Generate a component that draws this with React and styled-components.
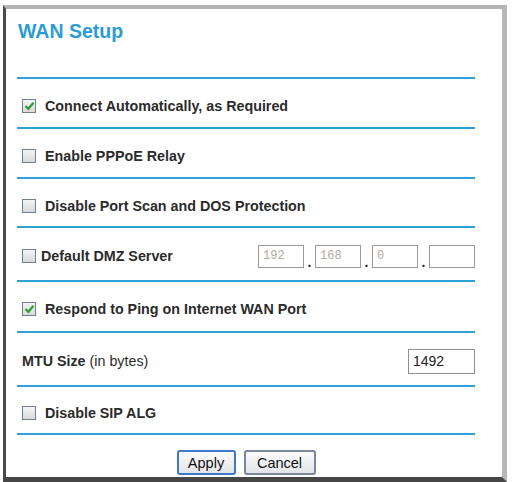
import styled, { createGlobalStyle } from 'styled-components'

const Global = createGlobalStyle`
  html, body {
    margin: 0;
    padding: 0;
    background: #ffffff;
  }
  body {
    font-family: "Liberation Sans", Arial, sans-serif;
    color: #2b2b2b;
  }
`

const Page = styled.div`
  width: 512px;
  height: 482px;
  padding: 5px 0 0 3px;
  box-sizing: border-box;
`

const Frame = styled.div`
  width: 504px;
  height: 477px;
  box-sizing: border-box;
  border-left: 3px solid #4a4a4a;
  border-top: 4px solid #b4b4b4;
  border-right: 5px solid #b8b8b8;
  border-bottom: 5px solid #464646;
  background: #fff;
  padding: 0 27px 0 11px;
`

const Title = styled.h1`
  margin: 0;
  height: 68px;
  box-sizing: border-box;
  padding: 11px 0 0 1px;
  font-size: 19.5px;
  line-height: 22px;
  font-weight: bold;
  color: #2b9cd6;
`

const Row = styled.div`
  height: ${(p) => p.h}px;
  box-sizing: border-box;
  border-top: 2px solid #2ea2d5;
  border-bottom: ${(p) => (p.last ? '2px solid #2ea2d5' : 'none')};
  display: flex;
  align-items: center;
  justify-content: space-between;
  padding: ${(p) => (p.low ? 6 : 4)}px 0 0 5px;
`

const Check = styled.label`
  display: flex;
  align-items: center;
  gap: ${(p) => (p.tight ? 5 : 9)}px;
  font-size: 14.3px;
  font-weight: bold;
  color: #2b2b2b;
`

const Box = styled.span`
  width: 14px;
  height: 14px;
  box-sizing: border-box;
  border: 1px solid #6f7f98;
  background: linear-gradient(#f4f4f4, #d9d9d9);
  display: flex;
  align-items: center;
  justify-content: center;
`

const Label = styled.span`
  font-size: 14.3px;
  font-weight: bold;
  color: #2b2b2b;
`

const Unit = styled.span`
  font-weight: normal;
`

const IpGroup = styled.div`
  display: flex;
  align-items: flex-end;
  gap: 2px;
`

const IpBox = styled.div`
  width: 46px;
  height: 23px;
  box-sizing: border-box;
  border: 1px solid #9a9a9a;
  font-family: "Liberation Mono", "Courier New", monospace;
  font-size: 12px;
  color: #b3aa9c;
  display: flex;
  align-items: center;
  padding-left: 4px;
`

const Dot = styled.span`
  width: 7px;
  text-align: center;
  font-size: 14px;
  font-weight: bold;
  line-height: 12px;
  color: #222;
`

const TextBox = styled.div`
  width: 67px;
  height: 25px;
  box-sizing: border-box;
  border: 1px solid #8e9099;
  font-size: 14px;
  color: #222;
  display: flex;
  align-items: center;
  padding-left: 4px;
`

const Footer = styled.div`
  display: flex;
  justify-content: center;
  gap: 8px;
  padding: 15px 0 0 0;
`

const Button = styled.button`
  height: 25px;
  width: ${(p) => p.w}px;
  box-sizing: border-box;
  border: ${(p) => (p.primary ? '2px solid #3f78c6' : '2px solid #7b879c')};
  border-radius: 3px;
  background: linear-gradient(#fbfbfb, #e3e4e8);
  font-family: "Liberation Sans", Arial, sans-serif;
  font-size: 14.5px;
  color: #111;
  padding: 0;
`

const Tick = () => (
  <svg width="11" height="10" viewBox="0 0 11 10">
    <path d="M1.5 5 L4.3 7.8 L9.5 1.8" fill="none" stroke="#2f9d2f" strokeWidth="2.2" />
  </svg>
)

const CheckItem = ({ checked, tight, children }) => (
  <Check tight={tight}>
    <Box>{checked && <Tick />}</Box>
    {children}
  </Check>
)

export default function App() {
  return (
    <Page>
      <Global />
      <Frame>
        <Title>WAN Setup</Title>
        <Row h={50} low>
          <CheckItem checked>Connect Automatically, as Required</CheckItem>
        </Row>
        <Row h={50} low>
          <CheckItem>Enable PPPoE Relay</CheckItem>
        </Row>
        <Row h={49} low>
          <CheckItem>Disable Port Scan and DOS Protection</CheckItem>
        </Row>
        <Row h={54}>
          <CheckItem tight>Default DMZ Server</CheckItem>
          <IpGroup>
            <IpBox>192</IpBox>
            <Dot>.</Dot>
            <IpBox>168</IpBox>
            <Dot>.</Dot>
            <IpBox>0</IpBox>
            <Dot>.</Dot>
            <IpBox />
          </IpGroup>
        </Row>
        <Row h={51}>
          <CheckItem checked>Respond to Ping on Internet WAN Port</CheckItem>
        </Row>
        <Row h={54}>
          <Label>
            MTU Size <Unit>(in bytes)</Unit>
          </Label>
          <TextBox>1492</TextBox>
        </Row>
        <Row h={50} last low>
          <CheckItem>Disable SIP ALG</CheckItem>
        </Row>
        <Footer>
          <Button primary w={59}>Apply</Button>
          <Button w={72}>Cancel</Button>
        </Footer>
      </Frame>
    </Page>
  )
}
